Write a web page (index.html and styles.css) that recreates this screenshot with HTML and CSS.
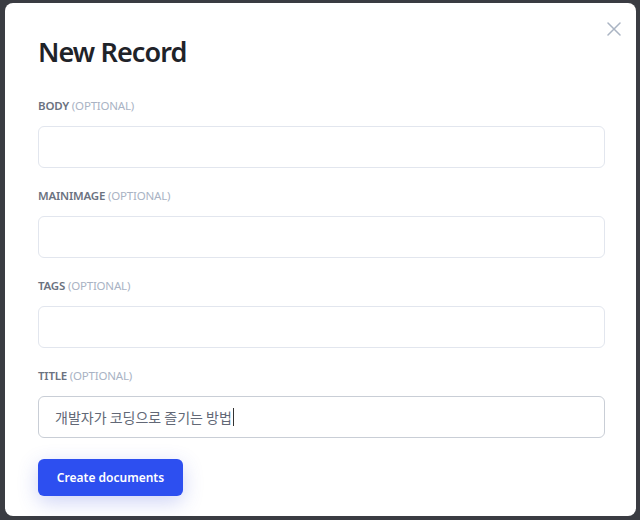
FILE: index.html
```html
<!DOCTYPE html>
<html>
<head>
<meta charset="utf-8">
<link rel="stylesheet" href="styles.css">
</head>
<body>
<div class="modal">
  <button class="close" aria-label="Close">
    <svg width="14" height="14" viewBox="0 0 14 14"><path d="M1 1L13 13M13 1L1 13" stroke="#aab4c3" stroke-width="1.5" fill="none" stroke-linecap="round"/></svg>
  </button>
  <h1 class="title">New Record</h1>
  <form class="form">
    <div class="field">
      <label class="label">Body <span class="opt">(optional)</span></label>
      <div class="input"></div>
    </div>
    <div class="field">
      <label class="label">mainImage <span class="opt">(optional)</span></label>
      <div class="input"></div>
    </div>
    <div class="field">
      <label class="label">Tags <span class="opt">(optional)</span></label>
      <div class="input"></div>
    </div>
    <div class="field">
      <label class="label">Title <span class="opt">(optional)</span></label>
      <div class="input focused"><span class="value">개발자가 코딩으로 즐기는 방법</span><span class="caret"></span></div>
    </div>
    <div class="actions">
      <button type="button" class="btn">Create documents</button>
    </div>
  </form>
</div>
</body>
</html>
```
FILE: styles.css
```css
* { box-sizing: border-box; }
html, body { margin: 0; height: 100%; }
body {
  background: #3a3c42;
  padding: 3px 4px 4px 5px;
  font-family: "Noto Sans", "Noto Sans CJK KR", sans-serif;
  overflow: hidden;
}
.modal {
  position: relative;
  background: #fff;
  border-radius: 8px;
  height: 513px;
  padding: 30px 31px 0 33px;
}
.close {
  position: absolute;
  top: 19px;
  right: 15px;
  background: none;
  border: 0;
  padding: 0;
  width: 14px;
  height: 14px;
  display: flex;
}
.title {
  margin: 0;
  font-size: 27px;
  line-height: 38px;
  font-weight: 600;
  letter-spacing: -0.9px;
  color: #1f2329;
}
.form {
  margin-top: 27px;
  display: flex;
  flex-direction: column;
}
.field {
  display: flex;
  flex-direction: column;
  margin-bottom: 20px;
}
.label {
  font-size: 11.5px;
  line-height: 16px;
  font-weight: 600;
  letter-spacing: -0.2px;
  color: #6b7280;
  text-transform: uppercase;
  margin-bottom: 12px;
}
.opt {
  color: #a9b3c4;
  font-weight: 400;
}
.input {
  height: 42px;
  border: 1px solid #e2e6ee;
  border-radius: 6px;
  display: flex;
  align-items: center;
  padding: 0 16px;
}
.input.focused {
  border-color: #c9ced6;
}
.value {
  font-family: "Noto Sans CJK KR", sans-serif;
  font-size: 14px;
  color: #626876;
}
.caret {
  display: inline-block;
  width: 1px;
  height: 18px;
  background: #333;
  margin-left: 1px;
}
.actions {
  display: flex;
  margin-top: 1px;
}
.btn {
  background: #2d4ff0;
  color: #fff;
  border: 0;
  border-radius: 6px;
  height: 37px;
  width: 145px;
  font-family: inherit;
  font-size: 12px;
  font-weight: 600;
  box-shadow: 0 6px 20px rgba(60, 80, 220, 0.25);
}
```
